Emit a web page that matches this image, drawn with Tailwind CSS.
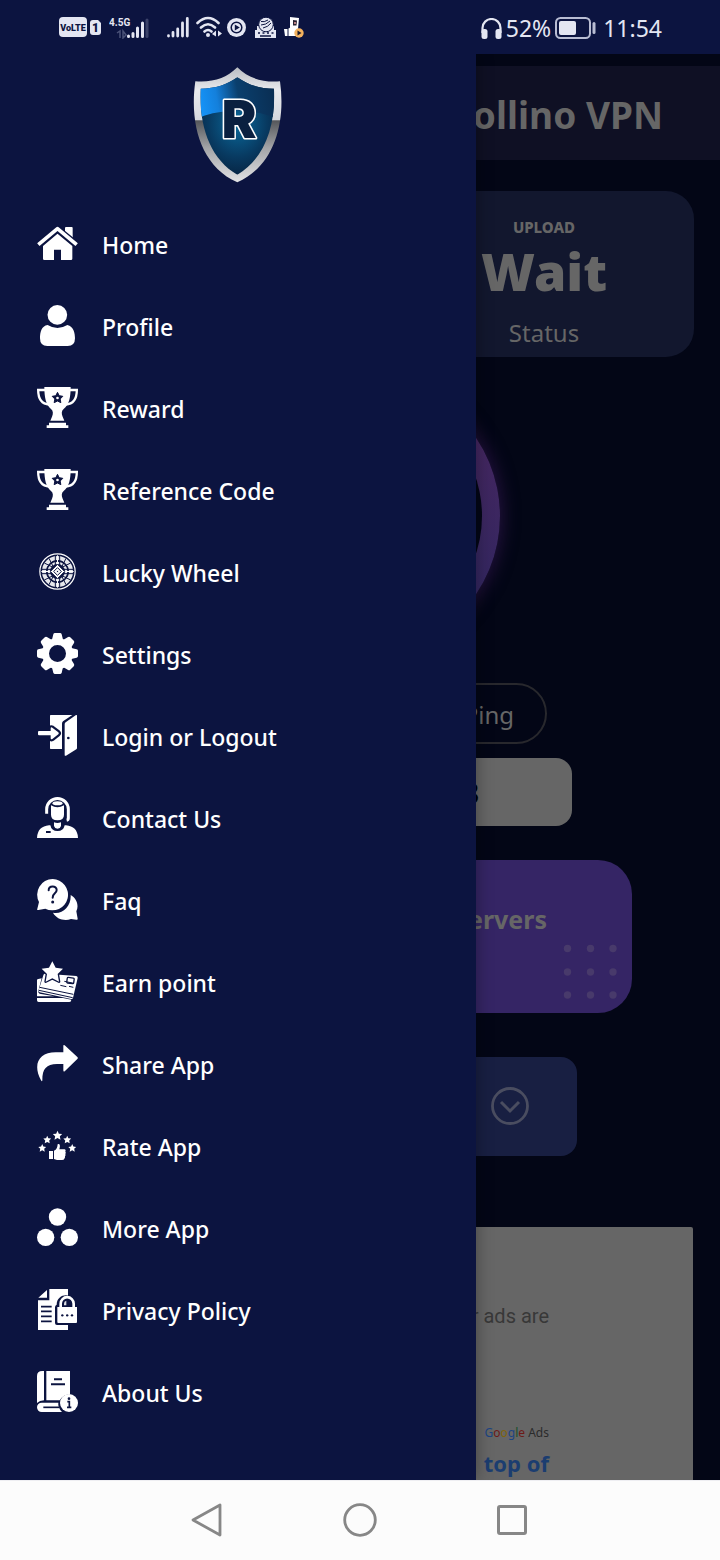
<!DOCTYPE html>
<html lang="en">
<head>
<meta charset="utf-8">
<meta name="viewport" content="width=device-width, initial-scale=1">
<title>Rollino VPN</title>
<script src="https://cdn.jsdelivr.net/npm/@tailwindcss/browser@4"></script>
</head>
<body class="flex min-h-screen flex-col bg-[#030616] font-['Noto_Sans',sans-serif]">

<!-- Status bar -->
<header class="flex h-[54px] items-center justify-between bg-[#0c1440] pr-[58px] pl-[59px] text-[#e4e6f2]">
  <div class="flex items-center">
    <svg class="h-5 w-7" viewBox="0 0 28 20"><rect width="28" height="20" rx="4" fill="#e4e6f2"/><text x="14" y="14" text-anchor="middle" font-family="Roboto,sans-serif" font-weight="900" font-size="9" fill="#0c1440">VoLTE</text></svg>
    <svg class="ml-[3px] h-[15px] w-[11px]" viewBox="0 0 11 15"><path d="M3 0h5l3 3v9q0 3-3 3H3q-3 0-3-3V3q0-3 3-3z" fill="#e4e6f2"/><text x="5.500" y="12" text-anchor="middle" font-family="Roboto,sans-serif" font-weight="900" font-size="12" fill="#0c1440">1</text></svg>
    <svg class="ml-2 h-6 w-10" viewBox="0 0 40 24"><text x="0" y="11" font-family="Roboto,sans-serif" font-weight="700" font-size="10" fill="#e4e6f2">4.5G</text><g stroke-width="3" stroke-linecap="round" stroke="#e4e6f2"><path d="M19.500 21.500v-.5M24 21.500v-3M28.500 21.500V13M33.500 21.500V8"/><path stroke="#3b4269" d="M38 21.500V5"/></g><path d="M8 18l3-2v7M14 16v7l3-3z" fill="none" stroke="#4a5177" stroke-width="1.500"/></svg>
    <svg class="ml-[18px] h-[22px] w-[22px]" viewBox="0 0 22 22"><g stroke-width="2.800" stroke-linecap="round" stroke="#e4e6f2"><path d="M1.500 20v-.3M6 20v-3.500M10.700 20v-7M15.500 20V7M20.300 20V2.500"/></g></svg>
    <svg class="ml-[7px] h-[22px] w-[26px]" viewBox="0 0 26 22"><g fill="none" stroke="#e4e6f2" stroke-width="2.600" stroke-linecap="round"><path d="M1.500 7Q12 -3 22.500 7M5 11.500q7-6.500 14 0M8.500 15.500q3.500-3 7 0"/></g><circle cx="12" cy="19" r="2" fill="#e4e6f2"/><path d="M20 14.500v6l-4-2.500zM22 14.500v6l4-3z" fill="#e4e6f2"/></svg>
    <svg class="ml-[5px] h-[19px] w-[19px]" viewBox="0 0 19 19"><circle cx="9.500" cy="9.500" r="9.500" fill="#e4e6f2"/><circle cx="9.500" cy="9.500" r="5.300" fill="none" stroke="#0c1440" stroke-width="1.500"/><path d="M7.800 6.500v6l5-3z" fill="#0c1440"/></svg>
    <svg class="ml-[9px] h-[21px] w-[21px]" viewBox="0 0 21 21"><path d="M2 9h17v4h2v8H0v-8h2z" fill="#e4e6f2"/><circle cx="11" cy="7.500" r="7.300" fill="#e4e6f2" stroke="#0c1440"/><path d="M6 4.500q3 1 7-1.500M6 8q5 0 9-4M8 11q5-1 8-5" fill="none" stroke="#0c1440"/><path d="M3 16h2M7.500 16h2M12 16h2M16.500 16h2M5 19h11" fill="none" stroke="#0c1440" stroke-width="1.500"/></svg>
    <svg class="ml-2 h-[21px] w-5" viewBox="0 0 20 21"><path d="M6 0l9 1-1 11H6z" fill="#fff"/><path d="M9 3l4 .5-.5 5H9z" fill="#2a2230"/><circle cx="11" cy="6" r="1" fill="#e9a0a0"/><path d="M0 12h4l3-2 8 2-2 7H1z" fill="#fff"/><path d="M4 12v7" stroke="#0c1440"/><circle cx="15" cy="16" r="4.700" fill="#f4b25e"/><path d="M13.500 13.500v5l4-2.500z" fill="#1b1b2b"/></svg>
  </div>
  <div class="flex items-center pt-0.5 text-[23px] leading-7">
    <svg class="h-[21px] w-[21px]" viewBox="0 0 21 21"><path d="M1.500 15v-5a9 9 0 0 1 18 0v5" fill="none" stroke="#e4e6f2" stroke-width="2.200"/><rect x=".5" y="11" width="6" height="10" rx="2.500" fill="#e4e6f2"/><rect x="14.500" y="11" width="6" height="10" rx="2.500" fill="#e4e6f2"/></svg>
    <span class="ml-1">52%</span>
    <svg class="ml-1 h-[22px] w-[41px]" viewBox="0 0 41 22"><rect x="1" y="1" width="34" height="20" rx="4.500" fill="none" stroke="#b9bdd3" stroke-width="2"/><rect x="4" y="4" width="17" height="14" rx="2" fill="#e4e6f2"/><rect x="37.500" y="5" width="3" height="12" rx="1.500" fill="#b9bdd3"/></svg>
    <span class="ml-[7px]">11:54</span>
  </div>
</header>

<div class="relative flex-1 overflow-hidden">

  <!-- Dimmed home screen under the drawer -->
  <main class="flex flex-col items-center text-[#666666]">
    <div class="mt-3 flex h-[94px] w-full items-center justify-end bg-[#0f1024] pt-1 pr-[57px]">
      <h1 class="text-[37px] leading-[48px] font-bold">Rollino VPN</h1>
    </div>
    <section class="mt-[31px] flex w-full px-[26px]">
      <div class="flex h-[166px] w-full justify-end rounded-[28px] bg-[#12172e] pr-[50px]">
        <div class="flex w-[200px] flex-col items-center pt-6">
          <p class="text-[15px] leading-6 font-extrabold">UPLOAD</p>
          <p class="text-[52px] leading-[64px] font-black">Wait</p>
          <p class="mt-3 text-2xl leading-9">Status</p>
        </div>
      </div>
    </section>
    <button type="button" aria-label="Connect" class="mt-[19px] size-[280px] rounded-full bg-linear-to-b from-[#4a2660] to-[#2c2660] p-[18px] shadow-[0_0_18px_1px_#2a1445]"><span class="block size-full rounded-full bg-[#030616]"></span></button>
    <button type="button" class="mt-[27px] flex h-[61px] w-[374px] items-center justify-end rounded-full border-2 border-[#28282d] pt-0.5 pr-[31px] text-2xl">Ping</button>
    <div class="mt-[14px] flex h-[68px] w-[424px] items-center justify-end rounded-2xl bg-[#666666] pt-0.5 pr-[93px] text-[28px] font-bold text-black">3</div>
    <button type="button" class="mt-[34px] flex h-[153px] w-[544px] flex-col items-end rounded-[34px] bg-[#352565] pt-[41px] pr-[15px]">
      <span class="pr-[70px] text-[25px] leading-9 font-bold">Servers</span>
      <svg class="mt-[7px] h-[55px] w-[54px]" viewBox="0 0 54 55" fill="#483a6b"><circle cx="4.500" cy="4.500" r="3.700"/><circle cx="27.500" cy="4.500" r="3.700"/><circle cx="50" cy="4.500" r="3.700"/><circle cx="4.500" cy="28" r="3.700"/><circle cx="27.500" cy="28" r="3.700"/><circle cx="50" cy="28" r="3.700"/><circle cx="4.500" cy="51" r="3.700"/><circle cx="27.500" cy="51" r="3.700"/><circle cx="50" cy="51" r="3.700"/></svg>
    </button>
    <button type="button" aria-label="Choose server" class="mt-[44px] flex h-[99px] w-[434px] items-center justify-end rounded-2xl bg-[#181f42] pr-12 pb-0.5">
      <svg class="size-[38px]" viewBox="0 0 38 38" fill="none" stroke="#4a4d60"><circle cx="19" cy="19" r="17.500" stroke-width="2.800"/><path d="M10 15l9 9 9-9" stroke-width="3"/></svg>
    </button>
    <section class="mt-[71px] flex w-full px-[27px]">
      <div class="flex h-[253px] w-full flex-col items-end rounded-t-xs bg-[#666666] pt-[74px] pr-[144px]">
        <p class="font-['Roboto',sans-serif] text-xl leading-[30px] text-[#383838]">Your ads are</p>
        <p class="mt-[92px] text-xs leading-5 text-[#2b2b2b]"><span class="text-[#1c4482]">G</span><span class="text-[#6d1a18]">o</span><span class="text-[#80640c]">o</span><span class="text-[#1c4482]">g</span><span class="text-[#15502a]">l</span><span class="text-[#6d1a18]">e</span> Ads</p>
        <p class="mt-[5px] text-[22px] leading-[30px] font-bold text-[#1b3d70]">top of</p>
      </div>
    </section>
  </main>

  <!-- Navigation drawer -->
  <aside class="absolute inset-y-0 left-0 w-[476px] bg-[#0c1440] shadow-[0_0_16px_rgba(0,0,0,0.35)]">
    <svg class="mx-auto mt-[13px] h-[116px] w-[90px]" viewBox="39 22 270 346" role="img" aria-label="Rollino">
      <defs>
        <linearGradient id="rim" x1="0" y1="0" x2="0" y2="1"><stop offset="0" stop-color="#b9bcc2"/><stop offset=".2" stop-color="#e9eaed"/><stop offset=".455" stop-color="#d6d8de"/><stop offset=".465" stop-color="#55575b"/><stop offset=".7" stop-color="#a3a4a7"/><stop offset="1" stop-color="#e2e3e5"/></linearGradient>
        <radialGradient id="face" cx=".5" cy=".48" r=".6"><stop offset="0" stop-color="#0a6a9c"/><stop offset=".55" stop-color="#083a61"/><stop offset="1" stop-color="#061b36"/></radialGradient>
        <linearGradient id="shine" x1="0" y1=".4" x2="1" y2=".3"><stop offset="0" stop-color="#1598ff"/><stop offset=".25" stop-color="#1480dc"/><stop offset=".5" stop-color="#0a3f6d"/><stop offset="1" stop-color="#0a2a4d"/></linearGradient>
        <clipPath id="inner"><path d="M172 52C142 74 106 86 62 86C56 200 92 298 172 344C252 298 288 200 282 86C238 86 202 74 172 52z"/></clipPath>
      </defs>
      <path d="M172 22C140 54 100 68 46 64C28 190 62 318 172 367C282 318 318 190 300 64C246 68 204 54 172 22z" fill="url(#rim)"/>
      <g clip-path="url(#inner)"><path d="M40 40h265v310H40z" fill="url(#face)"/><path d="M40 40h265v146C240 142 110 142 40 182z" fill="url(#shine)"/></g>
      <text x="177" y="235" text-anchor="middle" font-family="Inter,sans-serif" font-weight="900" font-size="156" fill="#0a2040" stroke="#fff" stroke-width="9" stroke-linejoin="round" paint-order="stroke">R</text>
    </svg>

    <nav class="mt-[19px] flex flex-col text-[23px] font-medium text-white">
      <a href="#home" class="flex h-[82px] items-center gap-6 pl-[37px]">
        <svg class="size-[41px]" viewBox="0 0 123 123" fill="#fff"><path d="M84 34V15q0-3 3-3h17q3 0 3 3v38z"/><path d="M5 64L61.500 18 118 64" fill="none" stroke="#0c1440" stroke-width="20"/><path d="M4 65L61.500 17 119 65" fill="none" stroke="#fff" stroke-width="11" stroke-linejoin="round"/><path d="M61.500 32L106 69v38q0 4-4 4H72V80H51v31H22q-4 0-4-4V69z"/></svg><span class="pt-1">Home</span></a>
      <a href="#profile" class="flex h-[82px] items-center gap-6 pl-[37px]">
        <svg class="size-[41px]" viewBox="0 0 123 123" fill="#fff"><circle cx="61" cy="29.500" r="29.500"/><path d="M32 60Q61 78 91 60C110 64 114 85 114 100Q114 123 92 123H31Q9 123 9 100C9 82 13 63 32 60z"/></svg><span class="pt-1">Profile</span></a>
      <a href="#reward" class="flex h-[82px] items-center gap-6 pl-[37px]">
        <svg class="size-[41px]" viewBox="0 0 123 123" fill="#fff"><path d="M22 0h79C101 32 96 54 80 66c-7 6-7 14-3 23l5 12H40l5-12c4-9 4-17-3-23C27 54 22 32 22 0z"/><path d="M25 9H3.500C3.500 34 12 51 37 53M98 9h21.500C119.500 34 111 51 86 53" fill="none" stroke="#fff" stroke-width="7"/><path d="M36 107h51v8h7v8H29v-8h7z"/><path d="M61.500 16l5 10 11 2-8 8 2 11-10-5-10 5 2-11-8-8 11-2z" fill="#0c1440" stroke="#0c1440" stroke-width="3" stroke-linejoin="round"/><circle cx="61.500" cy="33" r="4"/></svg><span class="pt-1">Reward</span></a>
      <a href="#reference-code" class="flex h-[82px] items-center gap-6 pl-[37px]">
        <svg class="size-[41px]" viewBox="0 0 123 123" fill="#fff"><path d="M22 0h79C101 32 96 54 80 66c-7 6-7 14-3 23l5 12H40l5-12c4-9 4-17-3-23C27 54 22 32 22 0z"/><path d="M25 9H3.500C3.500 34 12 51 37 53M98 9h21.500C119.500 34 111 51 86 53" fill="none" stroke="#fff" stroke-width="7"/><path d="M36 107h51v8h7v8H29v-8h7z"/><path d="M61.500 16l5 10 11 2-8 8 2 11-10-5-10 5 2-11-8-8 11-2z" fill="#0c1440" stroke="#0c1440" stroke-width="3" stroke-linejoin="round"/><circle cx="61.500" cy="33" r="4"/></svg><span class="pt-1">Reference Code</span></a>
      <a href="#lucky-wheel" class="flex h-[82px] items-center gap-6 pl-[37px]">
        <svg class="size-[41px]" viewBox="0 0 123 123" fill="none" stroke="#fff" stroke-width="3"><circle cx="61.500" cy="61.500" r="53" stroke-width="3.500"/><circle cx="61.500" cy="61.500" r="40" stroke-width="13" stroke-opacity=".9"/><circle cx="61.500" cy="61.500" r="26" stroke-width="7" stroke-opacity=".9"/><g stroke="#0c1440" stroke-width="3"><circle cx="61.500" cy="61.500" r="33"/><path d="M55 15v30M68 15v30M55 78v30M68 78v30M15 55h30M15 68h30M78 55h30M78 68h30M36 22l12 24M87 22L75 46M36 101l12-24M87 101L75 77M22 36l24 12M101 36L77 48M22 87l24-12M101 87L77 75"/></g><path d="M61.500 13v30M61.500 80v30M13 61.500h30M80 61.500h30"/><path d="M61.500 40L83 61.500 61.500 83 40 61.500z" fill="#fff" stroke="#0c1440"/><path d="M61.500 50L73 61.500 61.500 73 50 61.500z" stroke="#0c1440"/><circle cx="61.500" cy="61.500" r="3" fill="#0c1440"/></svg><span class="pt-1">Lucky Wheel</span></a>
      <a href="#settings" class="flex h-[82px] items-center gap-6 pl-[37px]">
        <svg class="size-[41px]" viewBox="0 0 123 123" fill="#fff"><path id="tooth" d="M44 24L49 4q1-4 5-4h15q4 0 5 4l5 20z"/><use href="#tooth" transform="rotate(45 61.500 61.500)"/><use href="#tooth" transform="rotate(90 61.500 61.500)"/><use href="#tooth" transform="rotate(135 61.500 61.500)"/><use href="#tooth" transform="rotate(180 61.500 61.500)"/><use href="#tooth" transform="rotate(225 61.500 61.500)"/><use href="#tooth" transform="rotate(270 61.500 61.500)"/><use href="#tooth" transform="rotate(315 61.500 61.500)"/><circle cx="61.500" cy="61.500" r="36" fill="none" stroke="#fff" stroke-width="21"/></svg><span class="pt-1">Settings</span></a>
      <a href="#login" class="flex h-[82px] items-center gap-6 pl-[37px]">
        <svg class="size-[41px]" viewBox="0 0 123 123" fill="#fff"><path d="M39 2q0-2 2-2h65L78 19q-3 3-3 7v76H41q-2 0-2-2z"/><path d="M117 0q3-1 3 3v96q0 3-2 4l-31 19q-4 2-4-3V28q0-4 3-6z"/><circle cx="94" cy="69" r="4" fill="#0c1440"/><path d="M6 48h35v-7q0-6 5-3l18 14q3 3 0 6L46 72q-5 3-5-3v-8H6q-3 0-3-3v-7q0-3 3-3z" stroke="#0c1440" stroke-width="13" paint-order="stroke" stroke-linejoin="round"/></svg><span class="pt-1">Login or Logout</span></a>
      <a href="#contact" class="flex h-[82px] items-center gap-6 pl-[37px]">
        <svg class="size-[41px]" viewBox="0 0 123 123" fill="#fff"><path d="M29 50V37a32.500 32.500 0 0 1 65 0v27q0 5-5 6" fill="none" stroke="#fff" stroke-width="9"/><path d="M42 25q19 12 39 0v28q0 17-19.500 17T42 53z"/><ellipse cx="61.500" cy="18.500" rx="15" ry="6"/><path d="M0 123C1 99 14 87 36 85h51c22 2 35 14 36 38z"/><path d="M40 84q3 18 21.500 18T83 84L76 78H47z" fill="#0c1440"/><path d="M51 76q10 4 21 0v11q-2 8-10.500 8T51 87z"/><path d="M27 102h14v6H27z" fill="#0c1440"/></svg><span class="pt-1">Contact Us</span></a>
      <a href="#faq" class="flex h-[82px] items-center gap-6 pl-[37px]">
        <svg class="size-[41px]" viewBox="0 0 123 123" fill="#fff"><path d="M101 48c17 9 26 30 17 49l4 22q1 4-4 3l-16-2c-20 7-44 0-54-19 28 6 55-19 53-53z"/><path d="M47 0a47 47 0 1 1-22 89L4 93q-5 1-3-4l5-20A47 47 0 0 1 47 0z"/><path d="M35 34c0-15 24-15 24-1 0 11-12 9-12 23" fill="none" stroke="#0c1440" stroke-width="6" stroke-linecap="round"/><circle cx="47" cy="69" r="4.500" fill="#0c1440"/></svg><span class="pt-1">Faq</span></a>
      <a href="#earn" class="flex h-[82px] items-center gap-6 pl-[37px]">
        <svg class="size-[41px]" viewBox="0 0 123 123" fill="#fff"><path d="M0 58q0-4 4-4l10-2L4 90q-1 6 4 8l44 8H0zM0 111h78l25 5q0 7-6 7H5q-5 0-5-5z"/><path d="M19 43q1-6 8-5l91 7q5 1 4 6l-14 60q-1 4-6 3L8 94q-4-1-3-6z"/><path d="M8 79l101 21M6 88l101 22M70 73l18 4M82 61l29 6M96 76l13 3" stroke="#0c1440" stroke-width="3"/><rect x="90" y="50" width="21" height="17" rx="3" fill="none" stroke="#0c1440" stroke-width="4" transform="rotate(8 100 58)"/><path d="M46 1l10 19 22 3-16 16 4 23-20-10-20 10 4-23-16-16 22-3z" stroke="#0c1440" stroke-width="8" paint-order="stroke" stroke-linejoin="round"/></svg><span class="pt-1">Earn point</span></a>
      <a href="#share" class="flex h-[82px] items-center gap-6 pl-[37px]">
        <svg class="size-[41px]" viewBox="0 0 123 123" fill="#fff"><path d="M79 9q0-5 4-2l38 35q3 3 0 6L84 84q-5 4-5-2V63H60C28 63 16 78 16 111q0 7-4 1C-14 63 6 28 56 28h23z"/></svg><span class="pt-1">Share App</span></a>
      <a href="#rate" class="flex h-[82px] items-center gap-6 pl-[37px]">
        <svg class="size-[41px]" viewBox="0 0 123 123" fill="#fff"><path id="star" d="M61.500 17l4 9 10 1-7 7 2 10-9-5-9 5 2-10-7-7 10-1z"/><use href="#star" transform="translate(-21 18) scale(.84)"/><use href="#star" transform="translate(39 18) scale(.84)"/><use href="#star" transform="translate(-36 43) scale(.84)"/><use href="#star" transform="translate(54 43) scale(.84)"/><path d="M36 78h12v24H36zM51 77c8-3 10-9 11-19 6-3 9 3 5 15h16q5 1 2 7 3 3 0 7 2 4-1 7 1 4-2 7-1 4-7 4H60q-5-2-9-3z"/></svg><span class="pt-1">Rate App</span></a>
      <a href="#more" class="flex h-[82px] items-center gap-6 pl-[37px]">
        <svg class="size-[41px]" viewBox="0 0 123 123" fill="#fff"><circle cx="61.500" cy="30" r="26"/><circle cx="26" cy="91" r="26"/><circle cx="97" cy="91" r="26"/></svg><span class="pt-1">More App</span></a>
      <a href="#privacy" class="flex h-[82px] items-center gap-6 pl-[37px]">
        <svg class="size-[41px]" viewBox="0 0 123 123" fill="#fff"><path d="M37 0h56v123H3V34h34zM30 3v23H4z"/><path d="M12 53h32M12 67h32M12 82h32M12 97h32" stroke="#0c1440" stroke-width="5"/><path d="M54 55q0-6 5-8C59 9 115 9 115 47l8 5v56H60q-6 0-6-6z" fill="#0c1440"/><path d="M61 54h59v45q0 3-3 3H64q-3 0-3-3z"/><path d="M71 57V44a19 19 0 0 1 39 0v13" fill="none" stroke="#fff" stroke-width="8"/><path d="M81 49v-5q0-7 7-9v14z" opacity=".85"/><g fill="#0c1440"><circle cx="76" cy="79" r="3.500"/><circle cx="90.500" cy="79" r="3.500"/><circle cx="105" cy="79" r="3.500"/></g></svg><span class="pt-1">Privacy Policy</span></a>
      <a href="#about" class="flex h-[82px] items-center gap-6 pl-[37px]">
        <svg class="size-[41px]" viewBox="0 0 123 123" fill="#fff"><path d="M0 15Q0 0 16 0h5v88q-13 0-21 8zM28 0h71v70q-20 0-31 18H28z"/><path d="M51 25h24M42 40h42" stroke="#0c1440" stroke-width="6"/><path d="M14 95h50q-2 14 11 28H14a14 14 0 0 1 0-28z"/><path d="M19 109h48" stroke="#0c1440" stroke-width="5"/><circle cx="96" cy="96" r="27"/><circle cx="96" cy="83" r="4" fill="#0c1440"/><path d="M91 92h6v17M90 109h13" fill="none" stroke="#0c1440" stroke-width="5"/></svg><span class="pt-1">About Us</span></a>
    </nav>
  </aside>
</div>

<!-- System navigation -->
<footer class="flex h-20 items-center justify-center gap-[118px] border-t border-[#eeeef2] bg-[#fcfcfc] pb-0.5">
  <button type="button" aria-label="Back"><svg class="block size-[34px]" viewBox="0 0 34 34" fill="none" stroke="#878787" stroke-width="2.800" stroke-linejoin="round"><path d="M29 2v30L2 17z"/></svg></button>
  <button type="button" aria-label="Home"><svg class="block size-[34px]" viewBox="0 0 34 34" fill="none" stroke="#878787" stroke-width="2.800"><circle cx="17" cy="17" r="15.300"/></svg></button>
  <button type="button" aria-label="Recent apps"><svg class="block size-[34px]" viewBox="0 0 34 34" fill="none" stroke="#878787" stroke-width="3"><rect x="3.500" y="3.500" width="27" height="27" rx="1.500"/></svg></button>
</footer>
</body>
</html>
